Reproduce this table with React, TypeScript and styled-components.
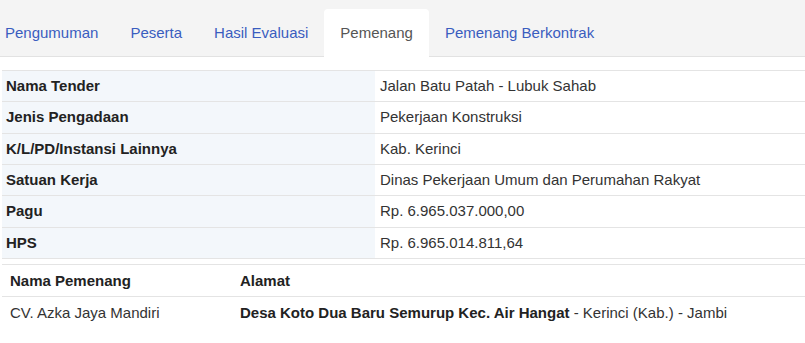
import React from 'react';
import styled, { createGlobalStyle } from 'styled-components';

const GlobalStyle = createGlobalStyle`
  html, body {
    margin: 0;
    padding: 0;
    background: #fff;
  }
  body {
    font-family: "Liberation Sans", Arial, sans-serif;
    font-size: 15px;
    color: #333;
    overflow: hidden;
  }
`;

const Page = styled.div`
  width: 805px;
  padding-left: 2px;
  box-sizing: border-box;
`;

const TabBar = styled.ul`
  display: flex;
  align-items: flex-end;
  list-style: none;
  margin: 0 0 0 -2px;
  padding: 9px 0 0 0;
  height: 47px;
  box-sizing: content-box;
  background: #f4f4f4;
  border-bottom: 1px solid #e2e2e2;
`;

const TabItem = styled.li`
  margin-bottom: -1px;
  &:first-child {
    margin-left: -11px;
  }
`;

const TabLink = styled.a<{ $active?: boolean }>`
  display: block;
  height: 48px;
  padding: 0 16px;
  line-height: 47px;
  border-radius: 4px 4px 0 0;
  text-decoration: none;
  color: ${(p) => (p.$active ? '#555' : '#3a5dbf')};
  background: ${(p) => (p.$active ? '#fff' : 'transparent')};
  cursor: pointer;
`;

const DetailTable = styled.table`
  width: 100%;
  margin-top: 13px;
  border-collapse: collapse;
  border-top: 1px solid #e4e4e4;
`;

const Row = styled.tr`
  border-bottom: 1px solid #e4e4e4;
`;

const LabelCell = styled.th`
  width: 365px;
  padding: 5px 4px;
  line-height: 20.33px;
  text-align: left;
  font-weight: bold;
  color: #222;
  background: #f3f7fb;
`;

const ValueCell = styled.td`
  padding: 5px 5px;
  line-height: 20.33px;
  color: #333;
`;

const WinnerTable = styled.table`
  width: 100%;
  margin-top: 5px;
  border-collapse: collapse;
  border-top: 1px solid #e4e4e4;
`;

const HeadCell = styled.th<{ $w?: number }>`
  width: ${(p) => (p.$w ? `${p.$w}px` : 'auto')};
  padding: 5px 8px;
  line-height: 21px;
  text-align: left;
  font-weight: bold;
  color: #222;
  border-bottom: 1px solid #e4e4e4;
`;

const BodyCell = styled.td`
  padding: 5px 8px;
  line-height: 21px;
  color: #333;
`;

const Strong = styled.b`
  color: #222;
`;

const tabs = ['Pengumuman', 'Peserta', 'Hasil Evaluasi', 'Pemenang', 'Pemenang Berkontrak'];

const details: [string, string][] = [
  ['Nama Tender', 'Jalan Batu Patah - Lubuk Sahab'],
  ['Jenis Pengadaan', 'Pekerjaan Konstruksi'],
  ['K/L/PD/Instansi Lainnya', 'Kab. Kerinci'],
  ['Satuan Kerja', 'Dinas Pekerjaan Umum dan Perumahan Rakyat'],
  ['Pagu', 'Rp. 6.965.037.000,00'],
  ['HPS', 'Rp. 6.965.014.811,64'],
];

export default function App() {
  return (
    <Page>
      <GlobalStyle />
      <TabBar>
        {tabs.map((t) => (
          <TabItem key={t}>
            <TabLink $active={t === 'Pemenang'}>{t}</TabLink>
          </TabItem>
        ))}
      </TabBar>
      <DetailTable>
        <tbody>
          {details.map(([label, value]) => (
            <Row key={label}>
              <LabelCell>{label}</LabelCell>
              <ValueCell>{value}</ValueCell>
            </Row>
          ))}
        </tbody>
      </DetailTable>
      <WinnerTable>
        <thead>
          <tr>
            <HeadCell $w={214}>Nama Pemenang</HeadCell>
            <HeadCell>Alamat</HeadCell>
          </tr>
        </thead>
        <tbody>
          <tr>
            <BodyCell>CV. Azka Jaya Mandiri</BodyCell>
            <BodyCell>
              <Strong>Desa Koto Dua Baru Semurup Kec. Air Hangat</Strong> - Kerinci (Kab.) - Jambi
            </BodyCell>
          </tr>
        </tbody>
      </WinnerTable>
    </Page>
  );
}
